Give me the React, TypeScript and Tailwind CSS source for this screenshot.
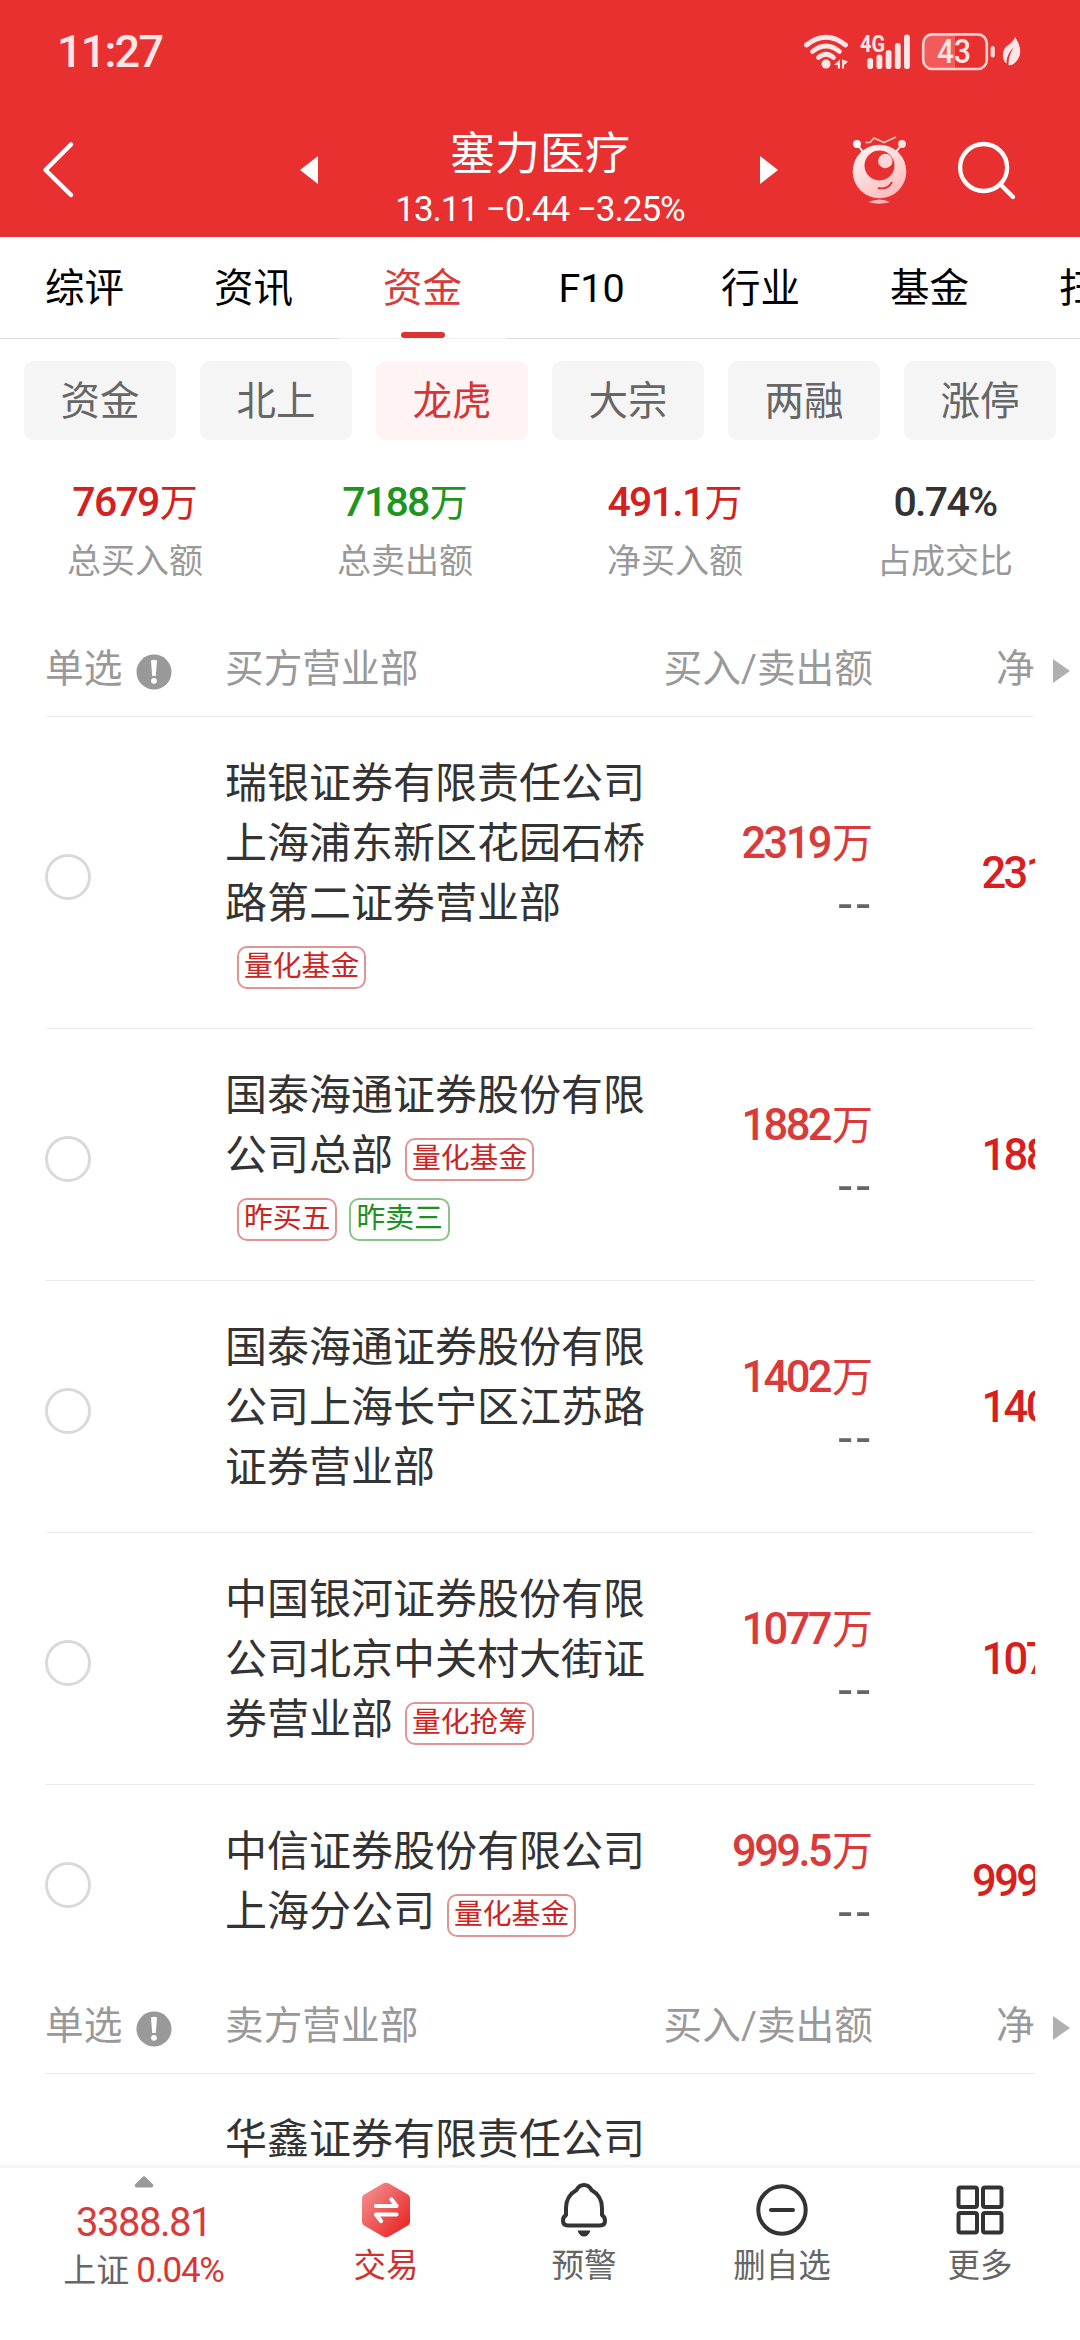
import React from "react";

const RED = "#e93030";

type Tone = "red" | "green";
type Line = { text?: string; tags?: { label: string; tone: Tone }[] };
type Branch = { lines: Line[]; amount: string };

const tabs = ["综评", "资讯", "资金", "F10", "行业", "基金", "扫雷"];
const filters = ["资金", "北上", "龙虎", "大宗", "两融", "涨停"];

const stats = [
  { num: "7679", unit: "万", label: "总买入额", color: "text-[#d42020]" },
  { num: "7188", unit: "万", label: "总卖出额", color: "text-[#1e951e]" },
  { num: "491.1", unit: "万", label: "净买入额", color: "text-[#d42020]" },
  { num: "0.74%", unit: "", label: "占成交比", color: "text-[#333333]" },
];

const quant = { label: "量化基金", tone: "red" as Tone };

const buyers: Branch[] = [
  {
    lines: [
      { text: "瑞银证券有限责任公司" },
      { text: "上海浦东新区花园石桥" },
      { text: "路第二证券营业部" },
      { tags: [quant] },
    ],
    amount: "2319",
  },
  {
    lines: [
      { text: "国泰海通证券股份有限" },
      { text: "公司总部", tags: [quant] },
      { tags: [{ label: "昨买五", tone: "red" }, { label: "昨卖三", tone: "green" }] },
    ],
    amount: "1882",
  },
  {
    lines: [
      { text: "国泰海通证券股份有限" },
      { text: "公司上海长宁区江苏路" },
      { text: "证券营业部" },
    ],
    amount: "1402",
  },
  {
    lines: [
      { text: "中国银河证券股份有限" },
      { text: "公司北京中关村大街证" },
      { text: "券营业部", tags: [{ label: "量化抢筹", tone: "red" }] },
    ],
    amount: "1077",
  },
  {
    lines: [{ text: "中信证券股份有限公司" }, { text: "上海分公司", tags: [quant] }],
    amount: "999.5",
  },
];

function StatusBar() {
  return (
    <div className="flex h-[104px] items-center justify-between pl-[57px] pr-[58px] text-[#ffe6e6]">
      <span className="text-[45px] leading-[104px] tracking-[-1.8px] font-medium">11:27</span>
      <div className="flex h-[40px] items-center">
        <svg width="46" height="40" viewBox="803 31 46 40" fill="none" stroke="#ffe6e6" strokeWidth="4.8" strokeLinecap="round">
          <path d="M806.500 44Q826 28.500 845.500 44" />
          <path d="M812.500 50.500Q826 39.500 839.500 50.500" />
          <path d="M818.500 56.500Q826 50 833.500 56.500" />
          <circle cx="826" cy="63" r="4.500" fill="#ffe6e6" stroke="none" />
          <path d="M834 64l6-5.500v9h-2.200v-3.500zM842 58.500v9h2v-4h1l3-3z" fill="#ffe6e6" stroke="none" />
        </svg>
        <svg className="ml-[10px]" width="52" height="40" viewBox="859 31 52 40">
          <text x="860" y="50.500" fontSize="23" fontWeight="700" textLength="25" lengthAdjust="spacingAndGlyphs" fill="#ffe6e6">4G</text>
          <g fill="#ffe6e6">
            <rect x="867.300" y="57" width="5.800" height="11" rx="2.800" />
            <rect x="876.500" y="53.500" width="5.800" height="14.500" rx="2.800" />
            <rect x="885.700" y="49" width="5.800" height="19" rx="2.800" />
            <rect x="894.900" y="42" width="5.800" height="26" rx="2.800" />
            <rect x="904" y="33.500" width="5.800" height="34.500" rx="2.800" />
          </g>
        </svg>
        <svg className="ml-[10px]" width="76" height="40" viewBox="921 31 76 40">
          <path d="M932 34h23v33.500H932q-9 0-9-9V43q0-9 9-9z" fill="#f15b5b" />
          <rect x="923.200" y="33.400" width="63.600" height="34.600" rx="9" fill="none" stroke="#ffd0d0" strokeWidth="2.600" />
          <rect x="990.600" y="45" width="4.200" height="11.500" rx="2" fill="#ffd8d8" />
          <text x="937" y="62" fontSize="33" fontWeight="500" textLength="34" lengthAdjust="spacingAndGlyphs" fill="#ffe6e6">43</text>
        </svg>
        <svg className="ml-[3px]" width="22" height="40" viewBox="1000 31 22 40">
          <path d="M1015 36C1021 45 1021.500 53 1018 58 1014 64 1011 64.500 1008.500 64 1008.500 56 1011 51 1014 46 1009 51 1006.500 56 1006.500 62.500 1002 59 1002 52 1005 47 1009 43 1013.500 41 1015 36z" fill="#ffe6e6" />
        </svg>
      </div>
    </div>
  );
}

function Robot() {
  return (
    <svg width="60" height="74" viewBox="850 133 60 74" fill="none">
      <defs>
        <linearGradient id="body" x1="0.2" y1="0" x2="0.8" y2="1">
          <stop offset="0" stopColor="#fff4f4" />
          <stop offset="1" stopColor="#ffb9b9" />
        </linearGradient>
      </defs>
      <path d="M857 144l6 8M902 144l-6 8" stroke="#fff" strokeWidth="2" />
      <circle cx="857" cy="144" r="3.900" fill="#fff" />
      <circle cx="902" cy="144" r="3.900" fill="#ffe3e3" />
      <path d="M865.500 142.500h4.500l4-4.500 10 4.500 12-5.500" stroke="#ffc4c4" strokeWidth="1.600" />
      <circle cx="879.500" cy="171.500" r="26.800" fill="url(#body)" />
      <circle cx="879.500" cy="165.500" r="15" fill={RED} />
      <circle cx="885.300" cy="161" r="7.200" fill="#ffd6d6" />
      <path d="M878 188q10 2 14-6" stroke={RED} strokeWidth="1.800" />
      <path d="M868.500 202q11-5 21.500 0-11 3.500-21.500 0z" fill="#ffb9b9" />
    </svg>
  );
}

function NavBar() {
  return (
    <div className="flex h-[133px] items-center pl-[40px] pr-[62px] pb-[2px]">
      <svg width="36" height="60" viewBox="0 0 36 60" fill="none" stroke="#fff" strokeWidth="4.500" strokeLinecap="round" strokeLinejoin="round">
        <path d="M31 4.500L5.500 30 31 55" />
      </svg>
      <svg className="ml-[224px]" width="18" height="28" viewBox="0 0 18 28">
        <path d="M0 14L18 0v28z" fill="#fff" />
      </svg>
      <div className="mt-[21px] flex w-[442px] flex-col items-center self-start pl-[2px] text-white">
        <span className="text-[45px] leading-[60px]">塞力医疗</span>
        <span className="text-[35px] leading-[50px] whitespace-nowrap tracking-[-1px]">13.11 −0.44 −3.25%</span>
      </div>
      <svg width="18" height="28" viewBox="0 0 18 28">
        <path d="M18 14L0 0v28z" fill="#fff" />
      </svg>
      <div className="ml-[72px] flex">
        <Robot />
      </div>
      <svg className="ml-[46px]" width="62" height="62" viewBox="956 139 62 62" fill="none" stroke="#fff" strokeWidth="4.300" strokeLinecap="round">
        <circle cx="983.600" cy="167.500" r="23.500" />
        <path d="M1001 185l12 12" />
      </svg>
    </div>
  );
}

function Tabs() {
  return (
    <div className="flex h-[102px] w-full shrink-0 overflow-hidden">
      {tabs.map((t, i) => {
        const active = t === "资金";
        return (
          <div
            key={i}
            className={
              "flex w-[169px] shrink-0 flex-col items-center border-b " +
              (active ? "border-[#f0f0f0] text-[#d93a3a]" : "border-[#dcdcdc] text-black")
            }
          >
            <span className="h-[95px] text-[39.500px] leading-[104px]">{t}</span>
            {active && <span className="h-[6px] w-[44px] rounded-[3px] bg-[#dc3434]" />}
          </div>
        );
      })}
    </div>
  );
}

function TableHead({ title }: { title: string }) {
  return (
    <div className="flex h-[97px] shrink-0 pl-[45px] text-[38.700px] text-[#999999]">
      <div className="flex w-[990px] items-center overflow-hidden border-b border-[#ebebeb] pt-[2px] leading-[94px]">
        <div className="flex w-[180px] shrink-0 items-center">
          <span>单选</span>
          <svg className="mt-[6px] ml-[14px]" width="36" height="36" viewBox="0 0 36 36">
            <circle cx="18" cy="18" r="17.500" fill="#999" />
            <path d="M15 6.500q3-1.500 6 0l-1.200 15.500h-3.600z" fill="#fff" />
            <circle cx="18" cy="26.800" r="2.900" fill="#fff" />
          </svg>
        </div>
        <span className="w-[420px] shrink-0">{title}</span>
        <span className="w-[228px] shrink-0 text-right">买入/卖出额</span>
        <span className="ml-[123px] shrink-0">净</span>
      </div>
      <svg className="mt-[39px] ml-[18px]" width="17" height="24" viewBox="0 0 17 24">
        <path d="M0 0l17 12L0 24z" fill="#b0b0b0" />
      </svg>
    </div>
  );
}

function Tag({ label, tone }: { label: string; tone: Tone }) {
  return (
    <span
      className={
        "mt-[8px] ml-[12px] flex h-[43px] items-center rounded-[10px] border-2 px-[5px] text-[28.800px] leading-[34px] " +
        (tone === "red" ? "border-[#e09595] text-[#cc2323]" : "border-[#8cc38c] text-[#1f8f1f]")
      }
    >
      <span className="mb-[3px]">{label}</span>
    </span>
  );
}

function Amount({ value }: { value: string }) {
  return (
    <span className="flex h-[60px] items-baseline whitespace-nowrap leading-[61px]">
      <span className="text-[43.500px] font-medium tracking-[-2.600px]">{value}</span>
      <span className="ml-[2px] text-[41px]">万</span>
    </span>
  );
}

function BranchRow({ lines, amount, last }: Branch & { last?: boolean }) {
  return (
    <div
      className={
        "ml-[45px] flex w-[990px] shrink-0 items-center overflow-hidden py-[36px] " +
        (last ? "" : "border-b border-[#ebebeb] pb-[35px]")
      }
    >
      <span className="mt-[8px] h-[46px] w-[46px] shrink-0 rounded-full border-[3px] border-[#d9d9d9]" />
      <div className="ml-[134px] w-[420px] shrink-0 text-[42px] leading-[60px] text-[#333333]">
        {lines.map((l, i) => (
          <div key={i} className="flex h-[60px] items-center whitespace-nowrap">
            {l.text && <span className="mt-[2px]">{l.text}</span>}
            {l.tags?.map((t) => (
              <Tag key={t.label} {...t} />
            ))}
          </div>
        ))}
      </div>
      <div className="flex w-[228px] shrink-0 flex-col items-end text-[#d93a3a]">
        <Amount value={amount} />
        <span className="h-[60px] font-['Liberation_Sans',sans-serif] text-[49px] leading-[59px] tracking-[1.700px] text-[#666666]">
          --
        </span>
      </div>
      <div className="flex w-[240px] shrink-0 flex-col items-end text-[#d81f1f]">
        <Amount value={amount} />
      </div>
    </div>
  );
}

function BottomItem({ label, red, children }: { label: string; red?: boolean; children: React.ReactNode }) {
  return (
    <div className={"flex w-[198px] flex-col items-center " + (red ? "text-[#d03030]" : "text-[#666666]")}>
      <div className="mt-[12px] flex h-[60px] items-center">{children}</div>
      <span className="mt-[4px] text-[32.500px] leading-[45px]">{label}</span>
    </div>
  );
}

function BottomBar() {
  return (
    <div className="flex h-[175px] shrink-0 border-t-[3px] border-[#f5f5f5] bg-white">
      <div className="flex w-[287px] flex-col items-center">
        <svg className="mt-[8px]" width="20" height="12" viewBox="0 0 20 12">
          <path d="M8.500 1Q10-.3 11.500 1L19 8.500Q20 11.500 17 11.500H3Q0 11.500 1 8.500z" fill="#999" />
        </svg>
        <span className="mt-[12px] text-[40px] leading-[46px] tracking-[-1.500px] text-[#d93a3a]">3388.81</span>
        <span className="mt-[1px] flex text-[33px] leading-[47px] text-[#666666]">
          上证
          <span className="ml-[7px] text-[35px] tracking-[-1.300px] text-[#dc3434]">0.04%</span>
        </span>
      </div>
      <BottomItem label="交易" red>
        <svg width="50" height="56" viewBox="0 0 50 56">
          <defs>
            <linearGradient id="hex" x1="0" y1="0.1" x2="0.8" y2="0.9">
              <stop offset="0" stopColor="#f49393" />
              <stop offset="1" stopColor="#e92b2b" />
            </linearGradient>
          </defs>
          <path d="M22 1.500Q25 0 28 1.500L46 12Q49 13.500 49 16.500V39.500Q49 42.500 46 44L28 54.500Q25 56 22 54.500L4 44Q1 42.500 1 39.500V16.500Q1 13.500 4 12z" fill="url(#hex)" />
          <path d="M15 24H35.500L30.500 17.500M35.500 32.500H15L20 39" fill="none" stroke="#fff" strokeWidth="4.200" strokeLinecap="round" strokeLinejoin="round" />
        </svg>
      </BottomItem>
      <BottomItem label="预警">
        <svg width="46" height="56" viewBox="0 0 46 56">
          <path d="M23 3Q28 3 30.500 8 41 14 41 26V33Q44 35 44 38.500 44 43.500 39 43.500H7Q2 43.500 2 38.500 2 35 5 33V26Q5 14 15.500 8 18 3 23 3z" fill="none" stroke="#333" strokeWidth="4" strokeLinejoin="round" />
          <path d="M16.500 48.500h13q-2 6-6.500 6t-6.500-6z" fill="#333" />
        </svg>
      </BottomItem>
      <BottomItem label="删自选">
        <svg width="52" height="52" viewBox="0 0 52 52" fill="none" stroke="#333" strokeWidth="4" strokeLinecap="round">
          <circle cx="26" cy="26" r="23.700" />
          <path d="M15 26h22" />
        </svg>
      </BottomItem>
      <BottomItem label="更多">
        <svg width="48" height="50" viewBox="0 0 48 50" fill="none" stroke="#333" strokeWidth="4">
          <rect x="2.500" y="2.500" width="18.500" height="19.500" rx="2" />
          <rect x="27" y="2.500" width="18.500" height="19.500" rx="2" />
          <rect x="2.500" y="28" width="18.500" height="19.500" rx="2" />
          <rect x="27" y="28" width="18.500" height="19.500" rx="2" />
        </svg>
      </BottomItem>
    </div>
  );
}

export default function App() {
  return (
    <div className="flex h-[2340px] w-[1080px] flex-col overflow-hidden bg-white font-['Roboto','Noto_Sans_CJK_SC',sans-serif]">
      <header className="h-[237px] shrink-0 bg-[#e93030]">
        <StatusBar />
        <NavBar />
      </header>
      <main className="flex min-h-0 flex-1 flex-col overflow-hidden">
        <Tabs />
        <div className="mt-[22px] flex shrink-0 gap-6 px-6">
          {filters.map((f) => (
            <span
              key={f}
              className={
                "flex h-[79px] w-[152px] items-center justify-center rounded-[9px] pt-[2px] text-[39.500px] " +
                (f === "龙虎" ? "bg-[#fff3f3] text-[#d43535]" : "bg-[#f5f5f5] text-[#666666]")
              }
            >
              {f}
            </span>
          ))}
        </div>
        <div className="mt-[32px] flex h-[148px] shrink-0">
          {stats.map((s) => (
            <div key={s.label} className="flex w-[270px] flex-col items-center">
              <span className={"flex h-[60px] items-baseline leading-[60px] " + s.color}>
                <span className="text-[41px] font-medium tracking-[-1.700px]">{s.num}</span>
                {s.unit && <span className="ml-[1px] text-[38px]">{s.unit}</span>}
              </span>
              <span className="text-[34px] leading-[59px] text-[#999999]">{s.label}</span>
            </div>
          ))}
        </div>
        <TableHead title="买方营业部" />
        {buyers.map((b, i) => (
          <BranchRow key={i} {...b} last={i === buyers.length - 1} />
        ))}
        <TableHead title="卖方营业部" />
        <div className="ml-[225px] mt-[36px] shrink-0 text-[42px] leading-[60px] text-[#333333]">华鑫证券有限责任公司</div>
      </main>
      <BottomBar />
    </div>
  );
}
